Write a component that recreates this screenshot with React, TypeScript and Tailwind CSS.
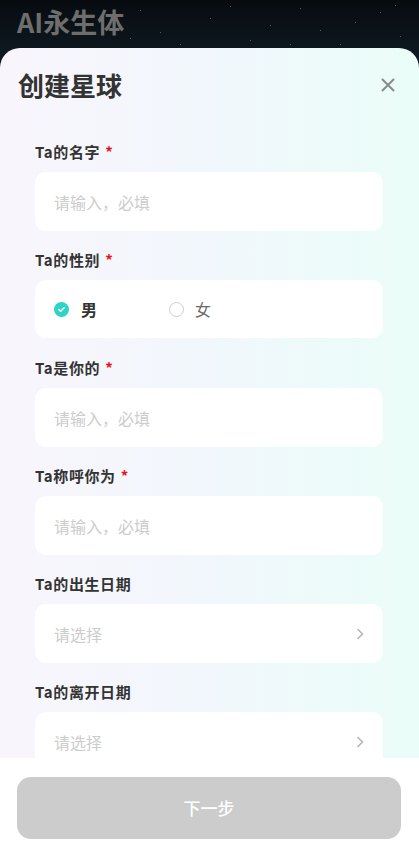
import React from "react";

const font = { fontFamily: '"Noto Sans CJK SC", "Noto Sans", sans-serif' };

function Label({ text, required }: { text: string; required?: boolean }) {
  return (
    <div className="flex items-center h-[20px] text-[15px] font-bold text-[#333333] leading-[20px] tracking-[0.6px]">
      <span>{text}</span>
      {required && <span className="ml-[5px] text-[#f01010] text-[15px] leading-[20px]">*</span>}
    </div>
  );
}

function InputBox({ placeholder, chevron }: { placeholder: string; chevron?: boolean }) {
  return (
    <div className="mt-[10px] h-[59px] rounded-[11px] bg-white flex items-center justify-between pl-[19px] pr-[18px]">
      <span className="text-[16px] text-[#cccccc]">{placeholder}</span>
      {chevron && (
        <svg width="10" height="14" viewBox="0 0 10 14" fill="none">
          <path d="M3 2.5 L7.5 7 L3 11.5" stroke="#b5b5b5" strokeWidth="1.6" strokeLinecap="round" strokeLinejoin="round" />
        </svg>
      )}
    </div>
  );
}

const stars = [
  [140, 10], [160, 32], [210, 18], [250, 40], [300, 8], [320, 30], [355, 22], [380, 12], [400, 36], [180, 44], [270, 25], [230, 6], [340, 44], [130, 38], [290, 44], [395, 5],
];

export default function App() {
  return (
    <div className="w-[419px] h-[863px] flex flex-col bg-[#0b1118] overflow-hidden relative" style={font}>
      <div className="relative h-[60px] shrink-0 -mb-[12px] bg-[linear-gradient(180deg,#070b10,#0f1a22)]">
        {stars.map(([x, y], i) => (
          <span key={i} className="absolute w-[1px] h-[1px] bg-[#6b7b86] rounded-full" style={{ left: x, top: y }} />
        ))}
        <div className="absolute left-[17px] top-[4px] text-[27px] font-bold text-[#6e6e6e] leading-[36px]">AI永生体</div>
      </div>
      <div className="relative flex-1 flex flex-col rounded-t-[20px] overflow-hidden bg-[linear-gradient(90deg,#f9f5fd_0%,#f1f7fc_50%,#eafdf8_100%)]">
        <div className="flex items-center justify-between h-[30px] mt-[22px] pl-[18px] pr-[24px] shrink-0">
          <div className="text-[26px] font-bold text-[#333333] leading-[30px]">创建星球</div>
          <svg width="14" height="14" viewBox="0 0 14 14">
            <path d="M1.5 1.5 L12.5 12.5 M12.5 1.5 L1.5 12.5" stroke="#8a8a8a" strokeWidth="2" strokeLinecap="round" />
          </svg>
        </div>
        <div className="flex-1 overflow-hidden px-[35px] pt-[42px] pr-[36px]">
          <div>
            <Label text="Ta的名字" required />
            <InputBox placeholder="请输入，必填" />
          </div>
          <div className="mt-[19px]">
            <Label text="Ta的性别" required />
            <div className="mt-[10px] h-[58px] rounded-[11px] bg-white flex items-center pl-[19px]">
              <div className="flex items-center w-[115px]">
                <span className="w-[15px] h-[15px] rounded-full bg-[#2dd4c8] flex items-center justify-center">
                  <svg width="9" height="9" viewBox="0 0 9 9">
                    <path d="M1.8 4.6 L3.7 6.3 L7.2 2.7" stroke="white" strokeWidth="1.5" fill="none" strokeLinecap="round" strokeLinejoin="round" />
                  </svg>
                </span>
                <span className="ml-[12px] text-[16px] font-bold text-[#333333]">男</span>
              </div>
              <div className="flex items-center">
                <span className="w-[15px] h-[15px] rounded-full border border-[#cfcfcf] bg-white" />
                <span className="ml-[11px] text-[16px] text-[#6a6a6a]">女</span>
              </div>
            </div>
          </div>
          <div className="mt-[20px]">
            <Label text="Ta是你的" required />
            <InputBox placeholder="请输入，必填" />
          </div>
          <div className="mt-[19px]">
            <Label text="Ta称呼你为" required />
            <InputBox placeholder="请输入，必填" />
          </div>
          <div className="mt-[19px]">
            <Label text="Ta的出生日期" />
            <InputBox placeholder="请选择" chevron />
          </div>
          <div className="mt-[19px]">
            <Label text="Ta的离开日期" />
            <InputBox placeholder="请选择" chevron />
          </div>
        </div>
        <div className="h-[105px] shrink-0 bg-white pt-[19px] px-[17px] pr-[18px]">
          <div className="h-[62px] rounded-[14px] bg-[#cccccc] flex items-center justify-center text-[17px] font-medium text-white">
            下一步
          </div>
        </div>
      </div>
    </div>
  );
}
